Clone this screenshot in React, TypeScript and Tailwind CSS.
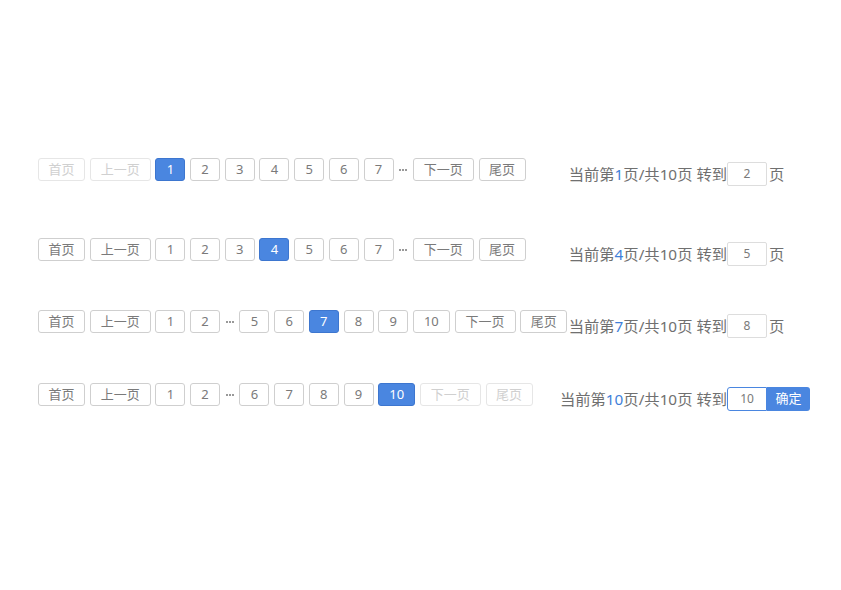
import React from 'react';

type Item = number | 'gap';

interface PagerRow {
  current: number;
  items: Item[];
  jump: string;
  confirm?: boolean;
  mt: string;
}

const TOTAL = 10;

const ROWS: PagerRow[] = [
  { current: 1, items: [1, 2, 3, 4, 5, 6, 7, 'gap'], jump: '2', mt: 'mt-0' },
  { current: 4, items: [1, 2, 3, 4, 5, 6, 7, 'gap'], jump: '5', mt: 'mt-[52px]' },
  { current: 7, items: [1, 2, 'gap', 5, 6, 7, 8, 9, 10], jump: '8', mt: 'mt-[44px]' },
  { current: 10, items: [1, 2, 'gap', 6, 7, 8, 9, 10], jump: '10', confirm: true, mt: 'mt-[45px]' },
];

function PageButton({
  label,
  width,
  active,
  disabled,
}: {
  label: string;
  width: string;
  active?: boolean;
  disabled?: boolean;
}) {
  const tone = active
    ? 'bg-[#4a86e0] border-[#3d76cf] text-white'
    : disabled
      ? 'bg-white border-[#e6e6e6] text-[#d0d0d0]'
      : 'bg-white border-[#cfcfcf] text-[#7a7a7a]';
  return (
    <span
      className={`flex h-[23px] items-center justify-center rounded-[3px] border text-[13px] leading-none ${width} ${tone}`}
    >
      {label}
    </span>
  );
}

// three small dots between page groups
function Gap() {
  return (
    <span className="flex w-[10px] items-center justify-center gap-[1px]">
      <span className="h-[2px] w-[2px] bg-[#999999]" />
      <span className="h-[2px] w-[2px] bg-[#999999]" />
      <span className="h-[2px] w-[2px] bg-[#999999]" />
    </span>
  );
}

function Pager({ row }: { row: PagerRow }) {
  const atStart = row.current === 1;
  const atEnd = row.current === TOTAL;
  return (
    <div className="flex shrink-0 items-center gap-[4.7px]">
      <PageButton label="首页" width="w-[47px]" disabled={atStart} />
      <PageButton label="上一页" width="w-[61px]" disabled={atStart} />
      {row.items.map((it, i) =>
        it === 'gap' ? (
          <Gap key={`g${i}`} />
        ) : (
          <PageButton
            key={it}
            label={String(it)}
            width={it >= 10 ? 'w-[37px]' : 'w-[30px]'}
            active={it === row.current}
          />
        )
      )}
      <PageButton label="下一页" width="w-[61px]" disabled={atEnd} />
      <PageButton label="尾页" width="w-[47px]" disabled={atEnd} />
    </div>
  );
}

function JumpInfo({ row }: { row: PagerRow }) {
  return (
    <div className="mt-[4px] flex h-[24px] min-w-0 flex-1 items-center">
      <div className="flex min-w-0 flex-1 justify-end whitespace-nowrap text-[15.3px] text-[#707070]">
        <span>
          当前第<span className="text-[#3f7fd9]">{row.current}</span>页/共{TOTAL}页 转到
        </span>
      </div>
      <span
        className={`flex h-[24px] w-[40px] shrink-0 items-center justify-center border bg-white text-[12px] text-[#7a7a7a] ${
          row.confirm ? 'rounded-l-[3px] border-[#4a86e0]' : 'rounded-[2px] border-[#dddddd]'
        }`}
      >
        {row.jump}
      </span>
      <div className="w-[43px] shrink-0">
        {row.confirm ? (
          <span className="flex h-[24px] w-[43px] items-center justify-center rounded-r-[3px] bg-[#4a86e0] text-[13px] text-white">
            确定
          </span>
        ) : (
          <span className="pl-[2px] text-[15.3px] text-[#707070]">页</span>
        )}
      </div>
    </div>
  );
}

export default function App() {
  return (
    <div
      className="h-[590px] w-[841px] bg-white pl-[38px] pt-[158px]"
      style={{ fontFamily: '"Noto Sans", "Noto Sans CJK SC", sans-serif' }}
    >
      {ROWS.map((row) => (
        <div key={row.current} className={`flex w-[772px] items-start ${row.mt}`}>
          <Pager row={row} />
          <JumpInfo row={row} />
        </div>
      ))}
    </div>
  );
}
